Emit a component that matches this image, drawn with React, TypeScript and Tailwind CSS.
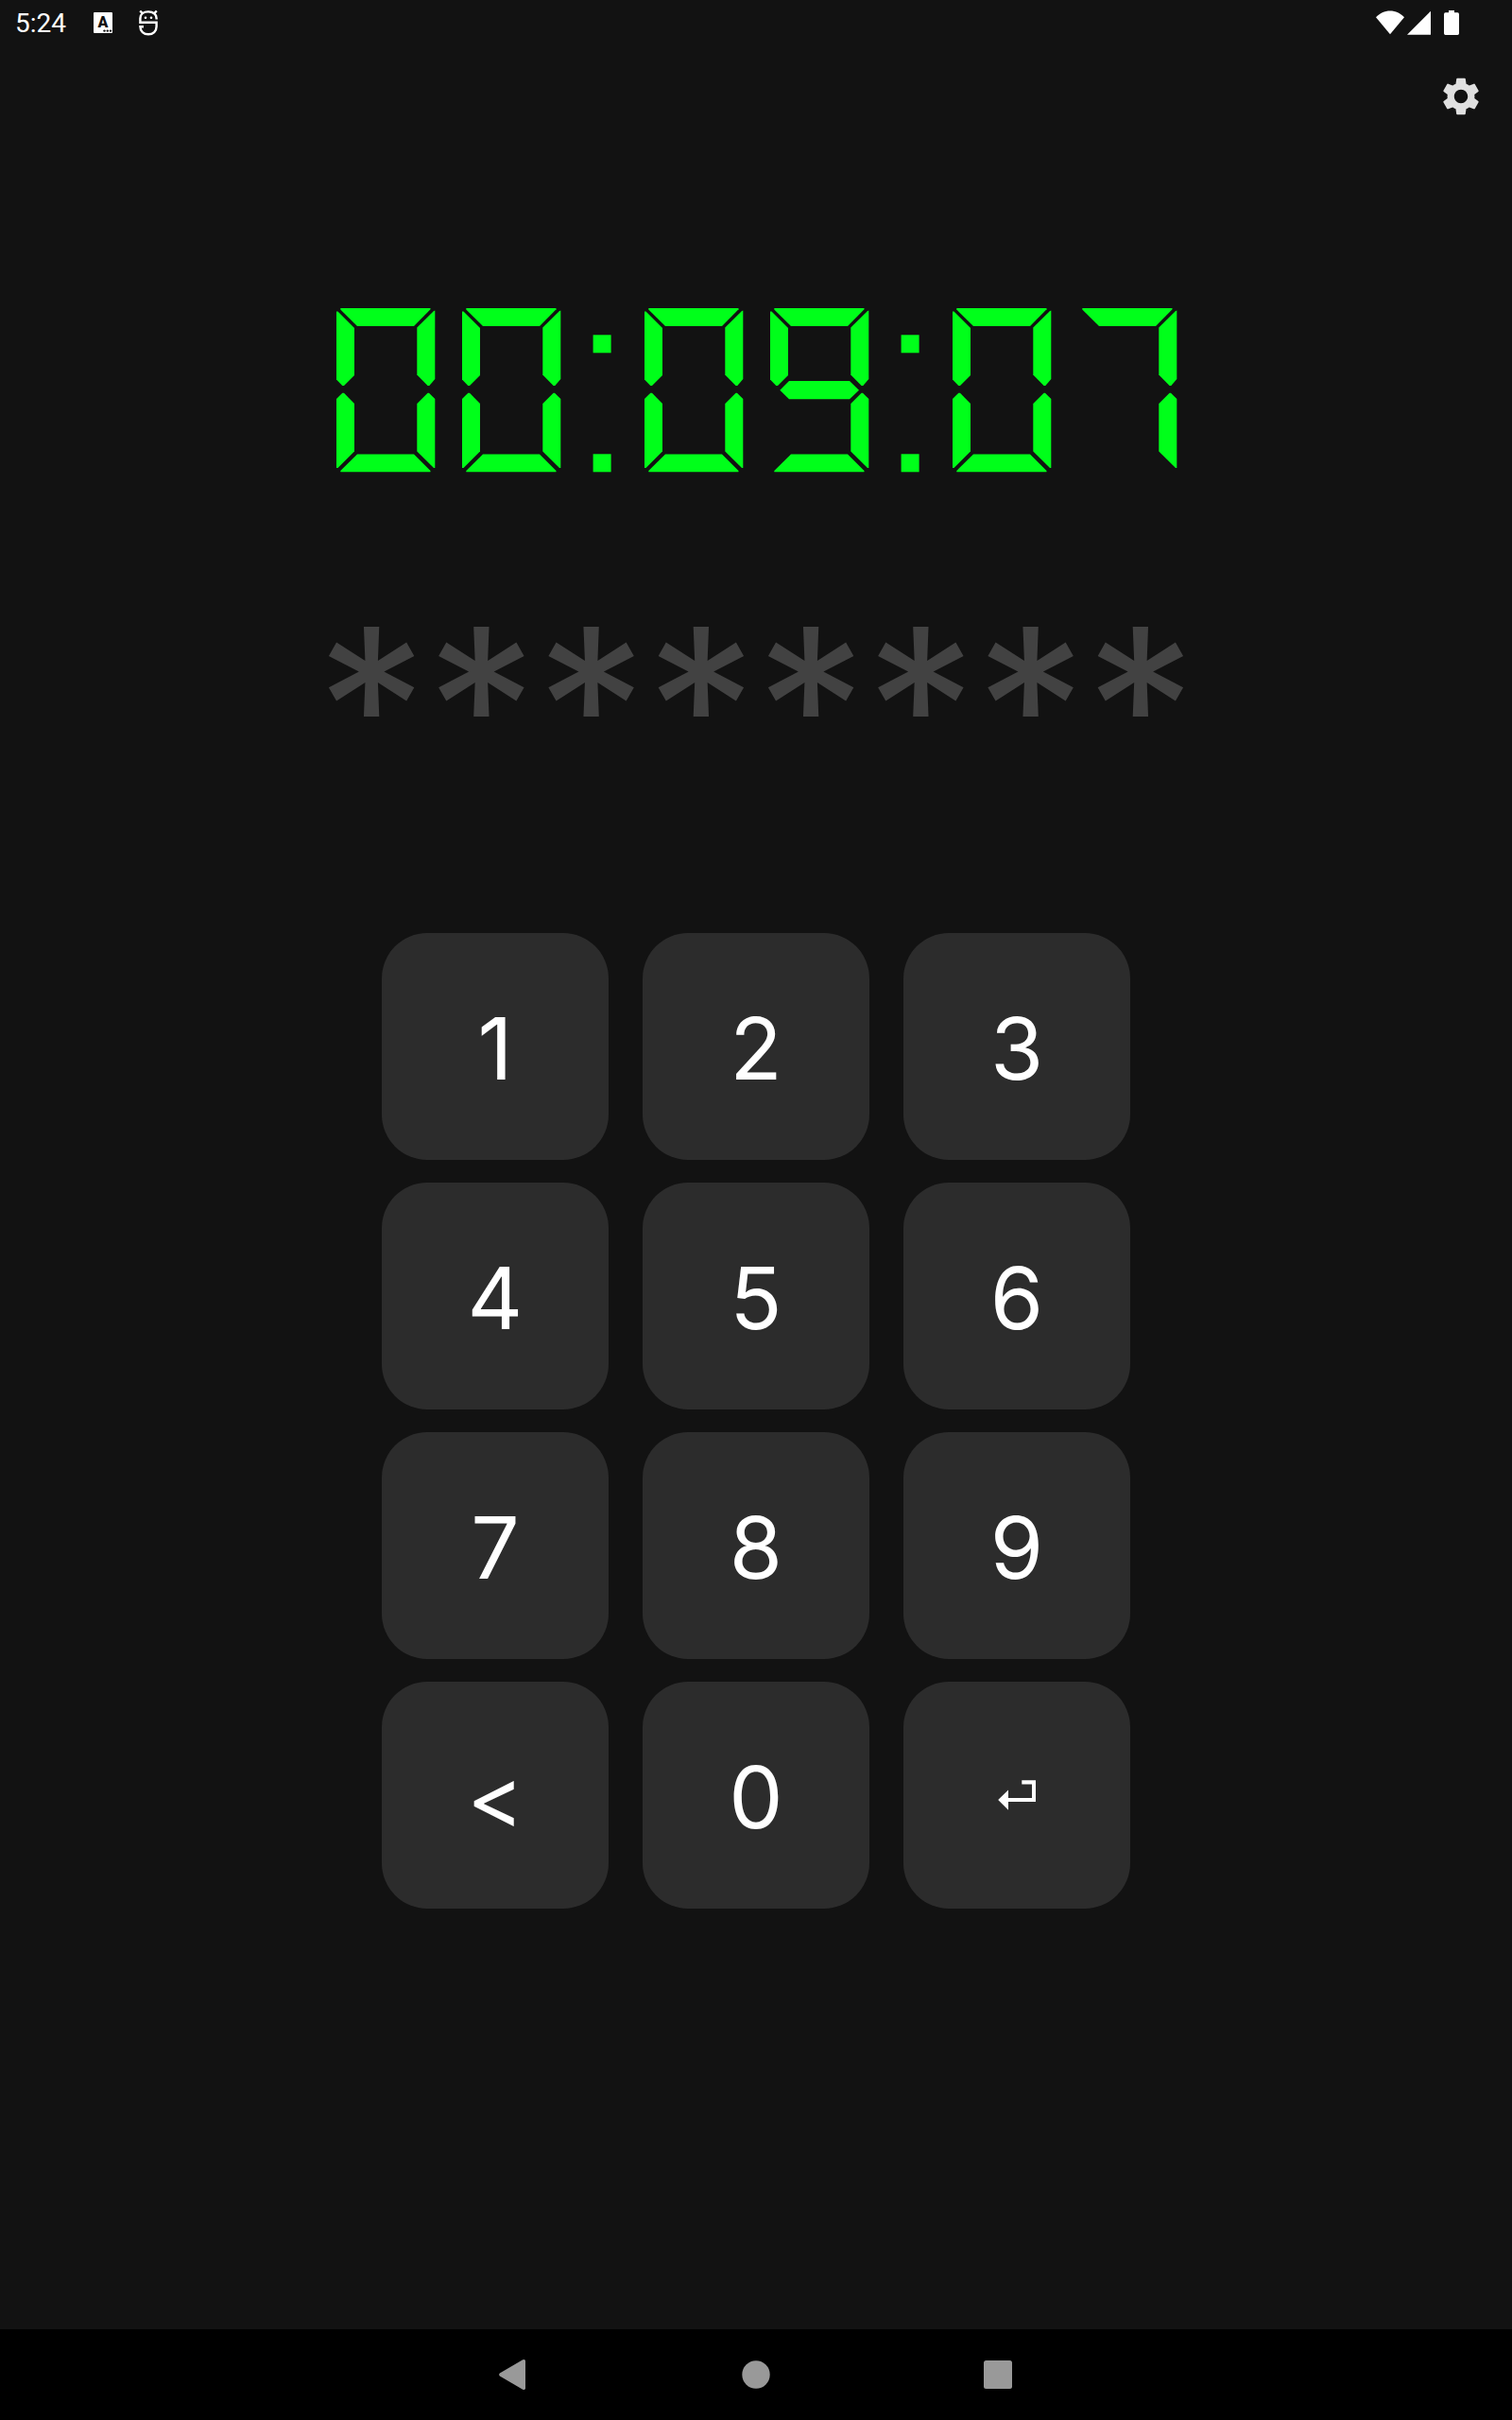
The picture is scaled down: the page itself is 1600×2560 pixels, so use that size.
import { MdSettings } from "react-icons/md";

type Segment = "a" | "b" | "c" | "d" | "e" | "f" | "g";

const segmentPoints: Record<Segment, string> = {
  a: "4.3,0 99.5,0 99.5,1.2 82,19 22,19 4.3,1.5",
  b: "104.3,2.6 104.3,75 98.3,82 96.6,82 85.3,70.5 85.3,20.5 103,3",
  c: "104.3,96 104.3,169 103,169 85.3,151.5 85.3,101 96.6,89.7 98,89.7",
  d: "22,154.5 82,154.5 99.5,172 99.5,173.3 4.3,173.3 4.3,172",
  e: "0,96 6.3,89.7 8,89.7 19,101 19,151.5 1.5,169 0,169",
  f: "0,3.6 1.5,3.6 19,21 19,71 8,82 6.3,82 0,75.5",
  g: "10.3,86.7 20,77 84,77 94,86.7 84,96.3 20,96.3"
};

const litSegments: Record<string, Segment[]> = {
  "0": ["a", "b", "c", "d", "e", "f"],
  "1": ["b", "c"],
  "2": ["a", "b", "d", "e", "g"],
  "3": ["a", "b", "c", "d", "g"],
  "4": ["b", "c", "f", "g"],
  "5": ["a", "c", "d", "f", "g"],
  "6": ["a", "c", "d", "e", "f", "g"],
  "7": ["a", "b", "c"],
  "8": ["a", "b", "c", "d", "e", "f", "g"],
  "9": ["a", "b", "c", "d", "f", "g"]
};

const keys = ["1", "2", "3", "4", "5", "6", "7", "8", "9", "<", "0", "enter"];

function DisplayCell({ value }: { value: string }) {
  if (value === ":") {
    return (
      <svg viewBox="0 0 60 174" className="h-[174px] w-[60px] fill-[#00ff1a]" aria-hidden="true">
        <rect x="20.6" y="28.3" width="19" height="19" />
        <rect x="20.6" y="154.3" width="19" height="19" />
      </svg>
    );
  }

  return (
    <svg viewBox="-15 0 133 174" className="h-[174px] w-[133px] fill-[#00ff1a]" aria-hidden="true">
      {litSegments[value].map((segment) => (
        <polygon key={segment} points={segmentPoints[segment]} />
      ))}
    </svg>
  );
}

function CountdownDisplay({ time }: { time: string }) {
  return (
    <div role="timer" aria-label={time} className="mt-50 flex justify-center">
      {time.split("").map((value, index) => (
        <DisplayCell key={index} value={value} />
      ))}
    </div>
  );
}

function EnterIcon() {
  return (
    <svg viewBox="0 0 40 32" className="h-8 w-10" aria-hidden="true">
      <path d="M25.3 0.3H40V23H11V31.7L0.2 21L11 10.5V19H36V4.6H25.3Z" fill="currentColor" />
    </svg>
  );
}

function StatusBar() {
  return (
    <div className="flex h-12 items-center justify-between pl-4 pr-14 text-white">
      <div className="flex items-center">
        <span className="w-[83px] pt-0.5 font-['Roboto',sans-serif] text-[28px] leading-8">5:24</span>
        <span className="flex h-[22px] w-5 flex-col items-center rounded-[1px] bg-white pt-1 text-[#121212]">
          <span className="font-['Roboto',sans-serif] text-base font-black leading-[14px]">A</span>
          <svg viewBox="0 0 20 4" className="h-1 w-5" fill="currentColor" aria-hidden="true">
            <circle cx="11.5" cy="1.6" r="1.2" />
            <circle cx="14.8" cy="1.6" r="1.2" />
            <circle cx="18" cy="1.6" r="1.2" />
          </svg>
        </span>
        <svg viewBox="0 0 20 28" className="ml-7 h-7 w-5" fill="none" stroke="currentColor" strokeWidth="2.4" aria-hidden="true">
          <path d="M1.2 1.5L4 4.4M18.8 1.5L16 4.4" />
          <path d="M18.6 10.5V9.5C18.6 5 15 2.4 10 2.4S1.4 5 1.4 9.5V13.7H18.6V18C18.6 23 15 26.3 10 26.3S1.4 23 1.4 18.3H5" />
          <circle cx="7" cy="8.7" r="1.3" fill="currentColor" stroke="none" />
          <circle cx="13" cy="8.7" r="1.3" fill="currentColor" stroke="none" />
        </svg>
      </div>
      <svg viewBox="0 0 88 26" className="h-[26px] w-[88px]" fill="currentColor" aria-hidden="true">
        <path d="M0 7.2C4 3 9.2.4 15 .4S26 3 30 7.2L15 25.3Z" />
        <path d="M33 25.7L58 .8V25.7Z" />
        <path d="M77 0H83V2.3H86.4Q88 2.3 88 4V24.2Q88 26 86.4 26H73.6Q72 26 72 24.2V4Q72 2.3 73.6 2.3H77Z" />
      </svg>
    </div>
  );
}

function NavigationBar() {
  return (
    <nav className="flex h-24 items-center justify-center gap-52 bg-black text-[#999]">
      <button type="button" aria-label="Back" className="size-12">
        <svg viewBox="0 0 48 48" fill="currentColor">
          <path d="M8.8 22.6L33.2 8.3Q36 7.2 36 9.8V38.2Q36 40.8 33.2 39.7L8.8 25.4Q7.2 24 8.8 22.6Z" />
        </svg>
      </button>
      <button type="button" aria-label="Home" className="size-12">
        <svg viewBox="0 0 48 48" fill="currentColor">
          <circle cx="24" cy="24" r="14.7" />
        </svg>
      </button>
      <button type="button" aria-label="Recent apps" className="size-12">
        <svg viewBox="0 0 48 48" fill="currentColor">
          <rect x="9" y="9" width="30" height="30" rx="2.5" />
        </svg>
      </button>
    </nav>
  );
}

export default function App() {
  return (
    <div className="flex min-h-screen flex-col bg-[#121212] font-['Inter',sans-serif]">
      <StatusBar />

      <header className="flex justify-end px-[30px] pt-[30px]">
        <button type="button" aria-label="Settings" className="text-[#e0e0e0]">
          <MdSettings className="size-12" />
        </button>
      </header>

      <main className="flex-1">
        <CountdownDisplay time="00:09:07" />

        <p className="mt-[132px] text-center text-[232px] leading-[232px] text-[#424242]">********</p>

        <div className="mt-[123px] grid grid-cols-[repeat(3,240px)] justify-center gap-x-9 gap-y-6">
          {keys.map((key) => (
            <button
              key={key}
              type="button"
              aria-label={key === "enter" ? "Enter" : undefined}
              className="flex h-60 items-center justify-center rounded-[48px] bg-[#2c2c2c] text-[91px] leading-none text-white"
            >
              {key === "enter" ? <EnterIcon /> : <span className="pt-1">{key}</span>}
            </button>
          ))}
        </div>
      </main>

      <NavigationBar />
    </div>
  );
}
